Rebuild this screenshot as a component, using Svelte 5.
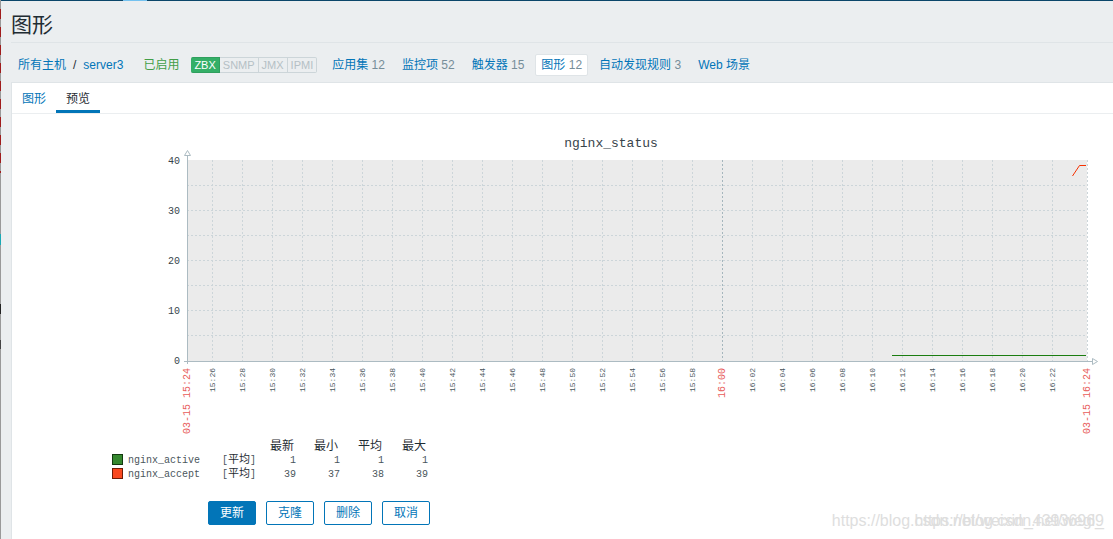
<script lang="ts">
	interface NavItem {
		label: string;
		count?: number;
		active?: boolean;
	}

	const navItems: NavItem[] = [
		{ label: '应用集', count: 12 },
		{ label: '监控项', count: 52 },
		{ label: '触发器', count: 15 },
		{ label: '图形', count: 12, active: true },
		{ label: '自动发现规则', count: 3 },
		{ label: 'Web 场景' }
	];

	const interfaces = ['ZBX', 'SNMP', 'JMX', 'IPMI'];

	const series = [
		{ name: 'nginx_active', color: '#35882f', border: '#123a10', values: [1, 1, 1, 1] },
		{ name: 'nginx_accept', color: '#f9481f', border: '#6e1c08', values: [39, 37, 38, 39] }
	];

	// plot area inside the chart
	const plot = { left: 87, top: 30, right: 987, bottom: 231 };

	const rows = [1, 2, 3, 4, 5, 6, 7].map((i) => plot.top + i * 25);
	const yTicks = [40, 30, 20, 10, 0].map((value, i) => ({ value, y: plot.top + i * 50 }));

	const xTicks = Array.from({ length: 29 }, (_, i) => {
		const minutes = 15 * 60 + 26 + i * 2;
		const hour = Math.floor(minutes / 60);
		const minute = String(minutes % 60).padStart(2, '0');
		return { label: `${hour}:${minute}`, x: 112 + i * 30, main: minutes % 60 === 0 };
	});
</script>

<div class="page">
	<div class="topbar"><span class="topbar__current"></span></div>
	<div class="edge"></div>

	<header>
		<h1>图形</h1>
		<nav class="host-nav">
			<a href="#hosts">所有主机</a>
			<span class="host-nav__slash">/</span>
			<a href="#server3">server3</a>
			<span class="host-nav__status">已启用</span>
			<span class="interfaces">
				{#each interfaces as name, i}
					<span class="interfaces__item" class:interfaces__item--on={i === 0}>{name}</span>
				{/each}
			</span>
			{#each navItems as item}
				<span class="host-nav__item" class:host-nav__item--active={item.active}>
					<a href="#{item.label}">{item.label}</a>
					{#if item.count}<span class="host-nav__count">{item.count}</span>{/if}
				</span>
			{/each}
		</nav>
	</header>

	<main>
		<div class="tabs">
			<a class="tabs__tab" href="#graph">图形</a>
			<a class="tabs__tab tabs__tab--active" href="#preview">预览</a>
		</div>

		<div class="preview">
			<svg class="chart" width="1004" height="308" role="img" aria-label="nginx_status">
				<text class="chart__title" x="511" y="17">nginx_status</text>
				<rect x={plot.left} y={plot.top} width={plot.right - plot.left} height={plot.bottom - plot.top} fill="#ebebeb" />

				{#each rows as y}
					<line class="grid" x1={plot.left} x2={plot.right} y1={y + 0.5} y2={y + 0.5} />
				{/each}
				{#each xTicks as tick}
					<line class="grid" class:grid--main={tick.main} x1={tick.x + 0.5} x2={tick.x + 0.5} y1={plot.top} y2={plot.bottom} />
				{/each}
				<line class="grid" x1={plot.right + 0.5} x2={plot.right + 0.5} y1={plot.top} y2={plot.bottom} />

				<path class="axis" d="M87.5 25V234M84 231.5H992" />
				<path class="arrow" d="M84.5 25.5h6l-3-5zM992.5 228.5v6l5-3z" />

				<path d="M792 225.5H986" stroke="#1b7d10" />
				<path d="M972.5 46L979.5 35.5H986" stroke="#f63100" fill="none" />

				{#each yTicks as tick}
					<text class="chart__value" x="80" y={tick.y + 4}>{tick.value}</text>
				{/each}
				{#each xTicks as tick}
					<text class="chart__time" class:chart__time--main={tick.main} transform="translate({tick.x + 3} 238) rotate(-90)">{tick.label}</text>
				{/each}
				<text class="chart__time chart__time--main" transform="translate(90 238) rotate(-90)">03-15 15:24</text>
				<text class="chart__time chart__time--main" transform="translate(990 238) rotate(-90)">03-15 16:24</text>
			</svg>

			<table class="legend">
				<thead>
					<tr>
						<th class="legend__name"></th>
						<th class="legend__kind"></th>
						<th>最新</th>
						<th>最小</th>
						<th>平均</th>
						<th>最大</th>
					</tr>
				</thead>
				<tbody>
					{#each series as line}
						<tr>
							<td class="legend__name">
								<div class="legend__label">
									<svg width="11" height="11">
										<rect x="0.5" y="0.5" width="10" height="10" fill={line.color} stroke={line.border} />
									</svg>
									{line.name}
								</div>
							</td>
							<td class="legend__kind">[<span>平均</span>]</td>
							{#each line.values as value}
								<td>{value}</td>
							{/each}
						</tr>
					{/each}
				</tbody>
			</table>
		</div>

		<div class="actions">
			<button class="primary" type="button">更新</button>
			<button type="button">克隆</button>
			<button type="button">删除</button>
			<button type="button">取消</button>
		</div>
	</main>

	<div class="watermark">https://blog.csdn.net/weixin_43936969</div>
	<div class="watermark">https://blog.csdn.net/wegl_</div>
</div>

<style>
	:global(body) {
		background: #ebeef0;
		overflow: hidden;
	}

	.page {
		position: relative;
		display: flex;
		flex-direction: column;
		min-height: 100vh;
		color: #1f2c33;
		font: 12px/14px 'Liberation Sans', 'Noto Sans CJK SC', sans-serif;
	}

	a {
		color: #0275b8;
		text-decoration: none;
	}

	.topbar {
		height: 1px;
		padding-left: 123px;
		background: #0a466a;
	}

	.topbar__current {
		display: block;
		width: 24px;
		height: 1px;
		background: #74c2f0;
	}

	.edge {
		position: absolute;
		top: 0;
		bottom: 0;
		left: 0;
		width: 1px;
		background:
			linear-gradient(#19a9b5, #19a9b5) 0 234px / 1px 11px no-repeat,
			linear-gradient(#222, #222) 0 304px / 1px 10px no-repeat,
			linear-gradient(#444, #444) 0 340px / 1px 9px no-repeat,
			repeating-linear-gradient(#a01c1c 0 10px, #999 10px 18px) 0 9px / 1px 164px no-repeat,
			#999;
	}

	header {
		margin-left: 11px;
	}

	h1 {
		margin: 0;
		padding: 11px 0 5px;
		border-bottom: 1px solid #dfe4e7;
		font-size: 21px;
		font-weight: 400;
		line-height: 25px;
	}

	.host-nav {
		display: flex;
		align-items: center;
		height: 24px;
		padding: 10px 7px 5px;
		white-space: nowrap;
	}

	.host-nav__slash {
		margin: 0 7px;
	}

	.host-nav__status {
		margin: 0 12px 0 20px;
		color: #429e47;
	}

	.host-nav__item {
		margin-left: 5px;
		padding: 3px 5px;
		border: 1px solid transparent;
		border-radius: 2px;
	}

	.host-nav__item--active {
		border-color: #dfe4e7;
		background: #fff;
	}

	.host-nav__count {
		color: #768d99;
	}

	.interfaces {
		display: flex;
		margin-right: 4px;
	}

	.interfaces__item {
		padding: 0 3px;
		border: 1px solid #ccd5d9;
		border-left-width: 0;
		color: #b5c0c5;
		font-size: 11px;
	}

	.interfaces__item--on {
		border-color: #2f9f5e;
		border-radius: 2px 0 0 2px;
		background: #34af67;
		color: #fff;
	}

	.interfaces__item:last-child {
		border-radius: 0 2px 2px 0;
	}

	main {
		flex: 1;
		margin-left: 11px;
		border: solid #dfe4e7;
		border-width: 1px 0 0 1px;
		background: #fff;
	}

	.tabs {
		display: flex;
		border-bottom: 1px solid #ebeef0;
	}

	.tabs__tab {
		padding: 9px 10px 4px;
		border-bottom: 3px solid transparent;
	}

	.tabs__tab--active {
		border-color: #0275b8;
		color: #1f2c33;
	}

	.preview {
		padding: 16px 0 0 88px;
	}

	.chart {
		display: block;
	}

	.chart text,
	.legend {
		font-family: 'Liberation Mono', 'Noto Sans CJK SC', monospace;
	}

	.chart__title {
		fill: #37444b;
		font-size: 13px;
		text-anchor: middle;
	}

	.chart__value {
		fill: #37444b;
		font-size: 10px;
		text-anchor: end;
	}

	.chart__time {
		fill: #4a565c;
		font-size: 8px;
		text-anchor: end;
	}

	.chart__time--main {
		fill: #e85c5a;
		font-size: 10px;
	}

	.grid {
		stroke: #ccd5d9;
		stroke-dasharray: 2 2;
	}

	.grid--main {
		stroke: #a5b6bd;
	}

	.axis {
		fill: none;
		stroke: #acbbc2;
	}

	.arrow {
		fill: #fff;
		stroke: #acbbc2;
	}

	.legend {
		margin-left: 12px;
		border-collapse: collapse;
		color: #4a565c;
		font-size: 10px;
		line-height: 14px;
	}

	.legend th,
	.legend td {
		width: 44px;
		height: 14px;
		padding: 0;
		font-weight: 400;
		text-align: right;
	}

	.legend th {
		width: 42px;
		padding: 2px 2px 0 0;
		color: #1f2c33;
		font-size: 12px;
	}

	.legend tr > .legend__name {
		width: 110px;
		padding: 0;
		text-align: left;
	}

	.legend__label {
		display: flex;
		align-items: flex-start;
		gap: 5px;
	}

	.legend tr > .legend__kind {
		width: 29px;
		padding: 0;
		text-align: left;
		white-space: nowrap;
	}

	.legend tr > .legend__kind + * {
		width: 38px;
	}

	.legend__kind span {
		color: #1f2c33;
		font-size: 11px;
		line-height: 10px;
	}

	.actions {
		display: flex;
		gap: 10px;
		padding: 19px 0 14px 196px;
	}

	button {
		width: 48px;
		height: 24px;
		padding: 0;
		border: 1px solid #0275b8;
		border-radius: 2px;
		background: #fff;
		color: #0275b8;
		font: inherit;
	}

	.primary {
		background: #0275b8;
		color: #fff;
	}

	.watermark {
		position: absolute;
		right: 9px;
		bottom: 9px;
		color: #dedede;
		font-size: 16px;
		line-height: 18px;
	}
</style>
